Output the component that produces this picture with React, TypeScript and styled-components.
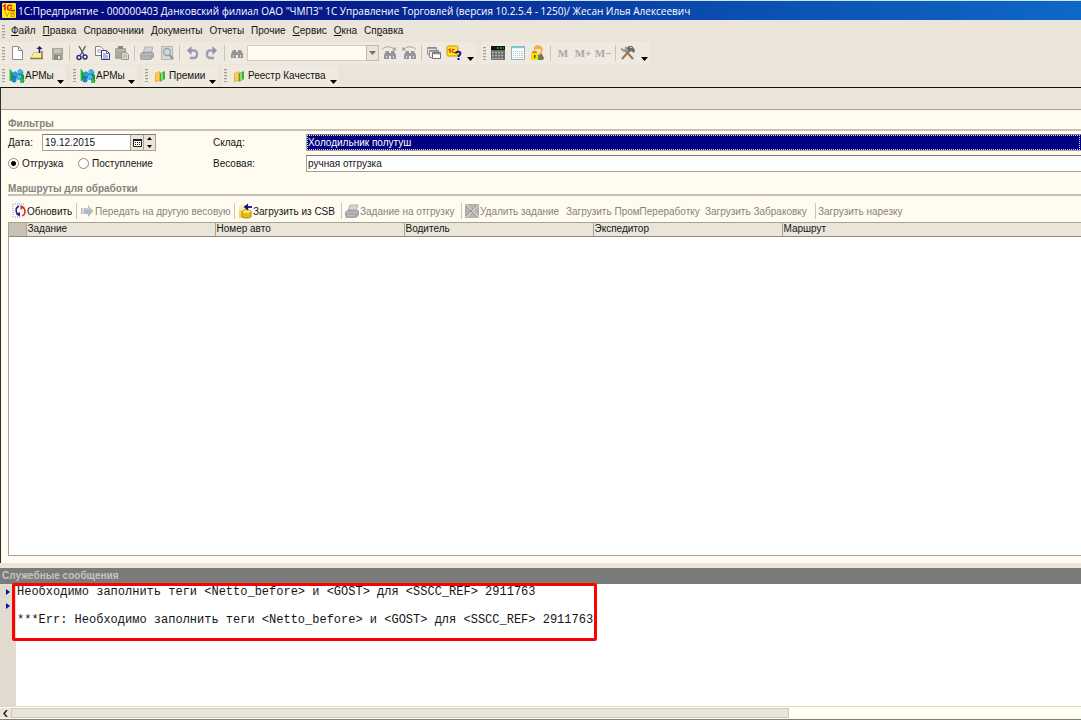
import React from "react";
import styled, { createGlobalStyle, css } from "styled-components";

const color = {
  face: "#ebe4d9",
  bar: "#efe9df",
  cream: "#fffbf0",
  line: "#a8a294",
  soft: "#c8c2b4",
  ink: "#141414",
  muted: "#86837c",
  navy: "#000080",
};

const GlobalStyle = createGlobalStyle`
  * { box-sizing: border-box; }
  html, body { margin: 0; }
  body, button, input, select, table {
    font-family: "Liberation Sans", Arial, sans-serif;
    font-size: 10px;
    color: ${color.ink};
  }
  button, input, select { margin: 0; padding: 0; border: 0; border-radius: 0; background: none; }
  svg { display: block; flex: none; }
`;

const Window = styled.div`
  display: flex;
  flex-direction: column;
  min-height: 100vh;
  overflow: hidden;
  background: ${color.face};
`;

const TitleBar = styled.header`
  display: flex;
  align-items: center;
  gap: 2px;
  height: 20px;
  padding-left: 2px;
  border-top: 1px solid #cfe4f4;
  background: linear-gradient(90deg, #04047c 0%, #061c8c 30%, #0a4cae 65%, #0e68c6 100%);
`;

const Title = styled.h1`
  margin: 0;
  font-family: "Open Sans", "Noto Sans", sans-serif;
  font-size: 10px;
  font-weight: 400;
  line-height: 18px;
  color: #fff;
  white-space: nowrap;
`;

const BarRow = styled.div<{ $height: number }>`
  display: flex;
  align-items: center;
  height: ${(p) => p.$height}px;
`;

const Bar = styled.div<{ $gap?: number }>`
  display: flex;
  align-items: center;
  height: 22px;
  margin-right: ${(p) => p.$gap ?? 0}px;
  padding-left: 2px;
  border-radius: 2px;
  background: ${color.bar};
`;

const Grip = styled.span`
  flex: none;
  width: 3px;
  height: 13px;
  margin-right: 2px;
  background: repeating-linear-gradient(#a39d92 0 1px, #d9d3c8 1px 2px, transparent 2px 3px);
`;

const MenuBar = styled.nav`
  display: flex;
  align-items: center;
  height: 22px;
  padding-left: 2px;
`;

const MenuItem = styled.button`
  padding: 0 3px;
  margin-left: 1px;
  line-height: 16px;
  white-space: nowrap;
  u { text-underline-offset: 1px; }
`;

const IconButton = styled.button<{ $width?: number }>`
  display: flex;
  flex: none;
  align-items: center;
  justify-content: center;
  width: ${(p) => p.$width ?? 20}px;
  height: 20px;
`;

const Separator = styled.span`
  flex: none;
  width: 1px;
  height: 16px;
  margin: 0 2px;
  background: #cbc5b9;
`;

const MoreButton = styled.button`
  flex: none;
  align-self: flex-end;
  display: flex;
  justify-content: center;
  align-items: flex-end;
  width: 12px;
  height: 12px;
  padding-bottom: 3px;
`;

const Memory = styled(IconButton)`
  font-family: "Liberation Serif", "Times New Roman", serif;
  font-size: 11px;
  font-weight: 700;
  color: #a7a5aa;
`;

const SearchBox = styled.div`
  position: relative;
  width: 132px;
  height: 16px;
`;

const SearchSelect = styled.select`
  display: block;
  width: 100%;
  height: 16px;
  appearance: none;
  border: 1px solid #d3cdc1;
  background: ${color.cream};
`;

const SearchArrow = styled.span`
  position: absolute;
  top: 0;
  right: 0;
  display: flex;
  align-items: center;
  justify-content: center;
  width: 13px;
  height: 16px;
  border: 1px solid #c2bcb0;
  background: ${color.face};
  pointer-events: none;
`;

const LabelButton = styled.button<{ $width: number; $spaced: boolean }>`
  display: flex;
  align-items: center;
  gap: ${(p) => (p.$spaced ? 3 : 0)}px;
  width: ${(p) => p.$width}px;
  height: 20px;
  padding-left: ${(p) => (p.$spaced ? 4 : 2)}px;
  white-space: nowrap;
`;

const Form = styled.main`
  display: flex;
  flex: 1 0 auto;
  flex-direction: column;
  border-top: 1px solid #101018;
  border-left: 1px solid #303030;
  background: ${color.cream};
`;

const TabStrip = styled.div`
  height: 22px;
  border-bottom: 1px solid ${color.line};
  background: ${color.face};
`;

const FormBody = styled.div`
  display: flex;
  flex: 1;
  flex-direction: column;
  padding: 8px 0 7px 7px;
`;

const GroupTitle = styled.h2`
  margin: 0;
  height: 13px;
  border-bottom: 2px solid ${color.soft};
  font-size: 10px;
  font-weight: 700;
  line-height: 11px;
  color: ${color.muted};
`;

const Filters = styled.div`
  display: grid;
  grid-template-columns: 205px 93px 1fr;
  row-gap: 4px;
  align-items: center;
  padding: 3px 0 11px;
`;

const Cell = styled.div`
  display: flex;
  align-items: center;
  height: 17px;
`;

const DateLabel = styled.label`
  width: 34px;
`;

const fieldBorder = css`
  border: 1px solid ${color.line};
  border-top-color: #7f7a70;
`;

const DateBox = styled.div`
  ${fieldBorder}
  display: flex;
  width: 114px;
  height: 17px;
  background: #fff;
`;

const DateInput = styled.input`
  flex: 1;
  min-width: 0;
  padding-left: 2px;
`;

const DateButton = styled.button`
  display: flex;
  align-items: center;
  justify-content: center;
  width: 13px;
  border-left: 1px solid ${color.line};
  background: ${color.face};
`;

const Spin = styled.div`
  display: flex;
  flex-direction: column;
  width: 12px;
  border-left: 1px solid ${color.line};
  background: ${color.face};
`;

const SpinButton = styled.button`
  display: flex;
  flex: 1;
  align-items: center;
  justify-content: center;
`;

const RadioLabel = styled.label`
  display: flex;
  align-items: center;
  gap: 3px;
  width: 70px;
`;

const Radio = styled.input`
  flex: none;
  appearance: none;
  width: 11px;
  height: 11px;
  margin: 0;
  border: 1px solid #8f8a80;
  border-radius: 50%;
  background: #fff;
  &:checked { background: radial-gradient(circle, #000 0 2px, #fff 3px); }
`;

const Field = styled.input<{ $active?: boolean }>`
  ${fieldBorder}
  width: 100%;
  height: 17px;
  padding-left: 1px;
  border-right: 0;
  background: #fff;
  ${(p) =>
    p.$active &&
    css`
      outline: 1px dotted #d8d8f0;
      outline-offset: -2px;
      background: ${color.navy};
      color: #fff;
    `}
`;

const CommandBar = styled.div`
  display: flex;
  align-items: center;
  height: 26px;
  padding: 4px 0 0 3px;
`;

const Command = styled.button<{ $width: number }>`
  display: flex;
  align-items: center;
  flex: none;
  width: ${(p) => p.$width}px;
  height: 20px;
  white-space: nowrap;
  &:disabled { color: ${color.muted}; }
`;

const Grid = styled.div`
  flex: 1;
  border: 1px solid ${color.line};
  border-right: 0;
  background: #fff;
`;

const Table = styled.table`
  width: 100%;
  table-layout: fixed;
  border-collapse: collapse;
`;

const Head = styled.th<{ $width?: number }>`
  width: ${(p) => (p.$width ? `${p.$width}px` : "auto")};
  height: 13px;
  padding: 0 1px;
  border-left: 1px solid ${color.line};
  border-bottom: 1px solid #8f897c;
  background: ${color.face};
  font-weight: 400;
  line-height: 12px;
  text-align: left;
  &:first-child { border-left: 0; background: #c8c1b6; }
`;

const Messages = styled.section`
  display: flex;
  flex-direction: column;
  height: 157px;
  padding-top: 5px;
  border-bottom: 1px solid #7f7f78;
`;

const MessagesTitle = styled.h2`
  margin: 0;
  height: 16px;
  padding-left: 2px;
  background: #7b7b7b;
  font-size: 10px;
  font-weight: 700;
  line-height: 16px;
  color: #c6c4c0;
`;

const MessagesBody = styled.div`
  display: flex;
  flex: 1;
  background: #fff;
`;

const Gutter = styled.div`
  display: flex;
  flex-direction: column;
  align-items: center;
  width: 16px;
  padding-top: 1px;
  background: #e2dbd0;
`;

const Marker = styled.span`
  display: flex;
  align-items: center;
  height: 14px;
`;

const Log = styled.div`
  position: relative;
  flex: 1;
  padding: 1px 0 0 1px;
  font-family: "Liberation Mono", "Courier New", monospace;
  font-size: 12px;
  line-height: 14px;
`;

const LogLine = styled.p`
  margin: 0;
  min-height: 14px;
  white-space: pre;
`;

const Highlight = styled.div`
  position: absolute;
  top: -1px;
  left: -4px;
  width: 585px;
  height: 58px;
  border: 3px solid #fd0000;
  border-radius: 2px;
  pointer-events: none;
`;

const ScrollBar = styled.div`
  display: flex;
  height: 13px;
  padding: 1px 0;
  border-top: 1px solid #dcd6ca;
  background: #fffff2;
`;

const ScrollButton = styled.button`
  display: flex;
  align-items: center;
  justify-content: center;
  width: 11px;
  background: ${color.face};
`;

const ScrollThumb = styled.div`
  width: 72%;
  border: 1px solid #cdc6ba;
  background: ${color.face};
`;

type IconProps = { children: React.ReactNode; w?: number; h?: number };

const Icon = ({ children, w = 16, h = 16 }: IconProps) => (
  <svg width={w} height={h} viewBox={`0 0 ${w} ${h}`} fill="none" aria-hidden="true">
    {children}
  </svg>
);

const LogoIcon = () => (
  <Icon w={14} h={15}>
    <rect width="14" height="15" rx="1" fill="#fde910" />
    <path d="M1 3.500 3 2v5.500M10 3.200C9 1.800 5.500 1.800 5.500 4.700S8 7.500 13 7.500M10 5.300H8" stroke="#e01818" strokeWidth="1.500" />
    <path d="m3 9 2 4.500L7 9M9 9h3v2H9zM9 11h3v2.500H9z" stroke="#c8a000" strokeWidth="1" />
  </Icon>
);

const NewIcon = () => (
  <Icon>
    <path d="M3.500 1.500h6l4 4v9h-10z" fill="#fff" stroke="#8a8a90" />
    <path d="M9.500 1.500v4h4" stroke="#8a8a90" />
  </Icon>
);

const OpenIcon = () => (
  <Icon>
    <path d="M1 13.500 4 7h8v7z" fill="#f4ecaa" />
    <path d="M12 13V6h2v7z" fill="#a8964c" />
    <path d="M1 13.500h13" stroke="#8e7a24" strokeWidth="1.500" />
    <path d="m2 13 2.500-5.500H12" stroke="#d8c878" />
    <path d="M10.500 8V3" stroke="#1a1a84" strokeWidth="1.600" />
    <path d="M7.500 4 10.500 1l3 3z" fill="#1a1a84" />
  </Icon>
);

const SaveIcon = () => (
  <Icon>
    <path d="M3 3h11v12H3z" fill="#a9aa96" />
    <path d="M5 4h7v4H5z" fill="#c4c5b4" />
    <path d="M5 10h7v5H5z" fill="#8b8c80" />
    <path d="M9 11h2v3H9z" fill="#deded4" />
  </Icon>
);

const CutIcon = () => (
  <Icon>
    <path d="m5 1 5 9M11.500 1 6.500 10" stroke="#55555c" strokeWidth="1.300" />
    <circle cx="5" cy="12.500" r="2" stroke="#26268e" strokeWidth="1.400" />
    <circle cx="11" cy="12" r="2" stroke="#26268e" strokeWidth="1.400" />
  </Icon>
);

const CopyIcon = () => (
  <Icon>
    <path d="M1.500 1.500h5l3 3v6h-8z" fill="#fff" stroke="#808088" />
    <path d="M3 5h4M3 7h4" stroke="#9a9aa4" />
    <path d="M7.500 5.500h5l3 3v6h-8z" fill="#fff" stroke="#33338f" />
    <path d="M12.500 5.500v3h3M9 9h3M9 11h5M9 13h5" stroke="#6d6dae" />
  </Icon>
);

const PasteIcon = () => (
  <Icon>
    <path d="M1 3h11v11H1z" fill="#aaa99a" />
    <path d="M4 1h5v4H4z" fill="#8b8b82" />
    <path d="M3 5h7" stroke="#d2d1c6" />
    <path d="M7.500 7.500h5l2 2v5h-7z" fill="#dcdbd4" stroke="#96968e" />
    <path d="M9 10h4M9 12h4" stroke="#a9a9a2" />
  </Icon>
);

const PrintIcon = () => (
  <Icon>
    <path d="M6 2h8l-2 6H4z" fill="#d3d3d4" stroke="#b4b4b6" />
    <path d="m1 9 3-2.500h9L15 8v4l-3 3H2l-1-2z" fill="#a6a6a9" />
    <path d="M2 9.500h10l2.500-2" stroke="#c0c0c2" />
    <path d="M3 12.500h8" stroke="#bcbcbe" strokeWidth="1.500" />
  </Icon>
);

const PreviewIcon = () => (
  <Icon>
    <path d="M2.500 1.500h11v13h-11z" fill="#d8dad8" stroke="#b4b6b5" />
    <circle cx="8" cy="7" r="3.500" fill="#c6d9dc" stroke="#9aa2a6" strokeWidth="1.300" />
    <path d="m10.500 10 3.500 4" stroke="#929296" strokeWidth="2" />
  </Icon>
);

const UndoIcon = ({ flip }: { flip?: boolean }) => (
  <Icon>
    <g transform={flip ? "matrix(-1 0 0 1 16 0)" : undefined}>
      <path d="M5 5.500h5a3 3 0 0 1 3 3v1.500a3 3 0 0 1-3 3H6" stroke="#9c9cb6" strokeWidth="2.400" />
      <path d="M7.500 1v9L3 5.500z" fill="#9191ae" />
    </g>
  </Icon>
);

const Binoculars = () => (
  <>
    <path d="M4 6h3v8H2v-4zM9 6h3l2 4v4H9zM7 8h2v3H7z" fill="#94949a" />
    <path d="M4 11h1v2H4zM11 11h1v2h-1z" fill="#dedee0" />
  </>
);

const FindIcon = () => <Icon><g transform="translate(0 -1)"><Binoculars /></g></Icon>;

const FindStepIcon = ({ flip }: { flip?: boolean }) => (
  <Icon>
    <g transform="translate(1 0)"><Binoculars /></g>
    <g transform={flip ? "matrix(-1 0 0 1 16 0)" : undefined}>
      <path d="M1 4.500C4 1 10 1 13 4" stroke="#a3a3a9" />
      <path d="m14.500 1.500.5 4h-4z" fill="#a3a3a9" />
    </g>
  </Icon>
);

const WindowsIcon = () => (
  <Icon>
    <path d="M1.500 2.500h9v7h-9z" fill="#e4e4e2" stroke="#9a9a9e" />
    <path d="M3.500 5.500h9v7h-9z" fill="#eeeeec" stroke="#8c8c90" />
    <path d="M6.500 7.500h8v6h-8z" fill="#fff" stroke="#707076" />
    <path d="M2 3h8M4 6h8M7 8.500h7" stroke="#8a8a90" strokeWidth="1.500" />
  </Icon>
);

const HelpIcon = () => (
  <Icon>
    <rect x="1" y="1" width="11" height="10" rx="1.500" fill="#ffe51a" stroke="#c09a10" />
    <path d="m2.500 5 1.500-1v4M8.500 4.500C6 3.500 5 7.500 8 7.500h3" stroke="#d82c10" strokeWidth="1.200" />
    <path d="M10 8.500c0-2.500 4.500-2.500 4.500 0 0 1.500-2 1.500-2 3.500" stroke="#10108c" strokeWidth="1.800" />
    <path d="M11.500 13h2v2h-2z" fill="#10108c" />
  </Icon>
);

const CalcIcon = () => (
  <Icon>
    <path d="M1 1h14v14H1z" fill="#6c6c6c" />
    <path d="M1 1h14v4H1z" fill="#0a1a0c" />
    <path d="M7 3h7" stroke="#2fa84c" strokeWidth="1.500" strokeDasharray="2 1" />
    <path d="M2 7.500h12M2 10.500h12M2 13.500h12" stroke="#b4b4b4" strokeWidth="1.500" strokeDasharray="2 1" />
  </Icon>
);

const CalendarIcon = () => (
  <Icon>
    <path d="M1.500 1.500h13v13h-13z" fill="#fff" stroke="#8fb4be" />
    <path d="M2 2.500h12" stroke="#74ccd8" strokeWidth="1.500" />
    <path d="M3 6.500h10M3 8.500h10M3 10.500h10M3 12.500h10" stroke="#a9c6cc" strokeDasharray="1 1" />
    <path d="M12 6v7" stroke="#e88c7c" strokeDasharray="1 1" />
  </Icon>
);

const UserIcon = () => (
  <Icon>
    <path d="M8 9h3l2 6H8z" fill="#3c9468" />
    <path d="M4 2 7 0l4 1 2 3-2 6H7L4 6z" fill="#eeb04c" />
    <path d="M5 4h5l1 2-2 3H6z" fill="#fbe1b4" />
    <path d="m11 9 2.500 5" stroke="#c03c2c" strokeWidth="1.500" />
    <path d="M3 9V7h3v2" stroke="#a48a10" strokeWidth="1.500" />
    <path d="M1 8h7v7H1z" fill="#f4de0c" />
    <path d="M4 10h1.500v3H4z" fill="#a02818" />
  </Icon>
);

const ToolsIcon = () => (
  <Icon>
    <path d="m2 14 8-9" stroke="#a87848" strokeWidth="2.200" />
    <path d="m6 3 3-2h3l3 4-1 3-3-2-2 1z" fill="#6b6b6e" />
    <path d="M10 2.500h2" stroke="#d0d0d2" />
    <path d="m5 5 8 9" stroke="#8a7a6a" strokeWidth="2.200" />
    <path d="M1 2v3l3 2 2-1 1-3-2-2v3H3z" fill="#9c9c9f" />
  </Icon>
);

const WorkplaceIcon = () => (
  <Icon>
    <path d="M1 1v12l4-2-1-6zM12 5l3 2v8l-3-1z" fill="#10a02c" />
    <path d="M1 1v12M12 10v5" stroke="#3ccc4c" />
    <path d="m5 5 4 3M8 11l5-8M6 8l-2 5M9 7l4 5" stroke="#186cae" strokeWidth="3.500" />
    <circle cx="11" cy="3.500" r="2.500" fill="#3db2e4" />
    <circle cx="6" cy="6" r="2.500" fill="#2a9cd8" />
    <circle cx="10" cy="9" r="2.500" fill="#46bce8" />
    <circle cx="5" cy="12" r="2.500" fill="#1f84c8" />
    <path d="M11.500 9.500v6l4.500-3z" fill="#22c03c" />
  </Icon>
);

const BookIcon = () => (
  <Icon w={12}>
    <path d="m1 5 5-2v10l-5 1z" fill="#f0a82c" />
    <path d="m2 5 3-1v8l-3 1z" fill="#fbcf54" />
    <path d="m6 5 5-2v8l-5 3z" fill="#3cae44" />
    <path d="m7 5 2-1v8l-2 1z" fill="#8fdb6a" />
  </Icon>
);

const RefreshIcon = () => (
  <Icon>
    <path d="M2 1v14M4 1h9M4 14h5" stroke="#57a0d0" strokeDasharray="1 1" />
    <path d="M8 3C4 5 4.500 9 7 11.500" stroke="#20208c" strokeWidth="1.500" />
    <path d="m5 11.500 4 2V9z" fill="#20208c" />
    <path d="M11 13c3.500-1 4-5 1.500-8.500" stroke="#d22434" strokeWidth="1.500" />
    <path d="m13.500 4-4-2v5z" fill="#d22434" />
  </Icon>
);

const ForwardIcon = () => (
  <Icon>
    <path d="M2 5h1.500v6H2zM4.500 5H9V2l5.500 6L9 14v-3H4.500z" fill="#b0b9bc" />
    <path d="M5 6h5V4l3.500 4" stroke="#d0d6d8" />
  </Icon>
);

const LoadIcon = () => (
  <Icon>
    <path d="M2 2h8l2 3v10H2z" fill="#f3d760" />
    <path d="M2 2h6v5H2z" fill="#f9efb0" />
    <path d="M5 8.500c0-2 9-2 9 0v5c0 2-9 2-9 0z" fill="#e3bd10" stroke="#a78a18" />
    <ellipse cx="9.500" cy="8.500" rx="4" ry="1.300" fill="#fff07c" />
    <path d="M15 4h-5" stroke="#15158a" strokeWidth="1.800" />
    <path d="M11 .5v7L6.500 4z" fill="#15158a" />
  </Icon>
);

const DeleteIcon = () => (
  <Icon>
    <path d="M1 1h14v14H1z" fill="#b0afaa" />
    <path d="M3 4h10M3 7h10M3 10h10M3 13h10" stroke="#c4c3be" />
    <path d="m2 2 12 12M14 2 2 14" stroke="#dcd0ca" strokeWidth="2" />
    <path d="m2 3 11 11M13 2 2 13" stroke="#958f8b" />
  </Icon>
);

const Triangle = ({ fill = "#000" }: { fill?: string }) => (
  <Icon w={7} h={4}>
    <path d="M0 0h7L3.500 4z" fill={fill} />
  </Icon>
);

const SmallTriangle = ({ up }: { up?: boolean }) => (
  <Icon w={5} h={3}>
    <path d={up ? "M0 3h5L2.500 0z" : "M0 0h5L2.500 3z"} fill="#000" />
  </Icon>
);

const PickIcon = () => (
  <Icon w={9} h={9}>
    <path d="M.5 1.500h8v7h-8z" fill="#fff" stroke="#222" />
    <path d="M0 2h9" stroke="#222" strokeWidth="2" />
    <path d="M2 4.500h5M2 6.500h5" stroke="#222" strokeDasharray="1 1" />
  </Icon>
);

const MarkerIcon = () => (
  <Icon w={4} h={6}>
    <path d="M0 0v6l4-3z" fill="#1010a0" />
  </Icon>
);

const menu: [string, string, string][] = [
  ["", "Ф", "айл"],
  ["", "П", "равка"],
  ["Справочники", "", ""],
  ["Документы", "", ""],
  ["Отчеты", "", ""],
  ["Прочие", "", ""],
  ["", "С", "ервис"],
  ["", "О", "кна"],
  ["Сп", "р", "авка"],
];

const shortcuts = [
  { label: "АРМы", icon: <WorkplaceIcon />, spaced: false, width: 47, gap: 5 },
  { label: "АРМы", icon: <WorkplaceIcon />, spaced: false, width: 47, gap: 6 },
  { label: "Премии", icon: <BookIcon />, spaced: true, width: 56, gap: 4 },
  { label: "Реестр Качества", icon: <BookIcon />, spaced: true, width: 98, gap: 0 },
];

const columns = [
  { title: "", width: 17 },
  { title: "Задание", width: 189 },
  { title: "Номер авто", width: 189 },
  { title: "Водитель", width: 189 },
  { title: "Экспедитор", width: 189 },
  { title: "Маршрут" },
];

const warning = "Необходимо заполнить теги <Netto_before> и <GOST> для <SSCC_REF> 2911763";

export default function App() {
  return (
    <Window>
      <GlobalStyle />
      <TitleBar>
        <LogoIcon />
        <Title>
          1С:Предприятие - 000000403 Данковский филиал ОАО "ЧМПЗ" 1С Управление Торговлей (версия 10.2.5.4 - 1250)/
          Жесан Илья Алексеевич
        </Title>
      </TitleBar>

      <MenuBar aria-label="Главное меню">
        <Grip />
        {menu.map(([before, key, after]) => (
          <MenuItem key={before + key + after}>
            {before}
            {key && <u>{key}</u>}
            {after}
          </MenuItem>
        ))}
      </MenuBar>

      <BarRow $height={22}>
        <Bar $gap={5}>
          <Grip />
          <IconButton aria-label="Новый"><NewIcon /></IconButton>
          <IconButton aria-label="Открыть"><OpenIcon /></IconButton>
          <IconButton aria-label="Сохранить"><SaveIcon /></IconButton>
          <Separator />
          <IconButton aria-label="Вырезать"><CutIcon /></IconButton>
          <IconButton aria-label="Копировать"><CopyIcon /></IconButton>
          <IconButton aria-label="Вставить"><PasteIcon /></IconButton>
          <Separator />
          <IconButton aria-label="Печать"><PrintIcon /></IconButton>
          <IconButton aria-label="Просмотр"><PreviewIcon /></IconButton>
          <Separator />
          <IconButton aria-label="Отменить"><UndoIcon /></IconButton>
          <IconButton aria-label="Вернуть"><UndoIcon flip /></IconButton>
          <Separator />
          <IconButton aria-label="Найти"><FindIcon /></IconButton>
          <SearchBox>
            <SearchSelect aria-label="Строка поиска" />
            <SearchArrow><Triangle fill="#77736b" /></SearchArrow>
          </SearchBox>
          <IconButton aria-label="Найти далее"><FindStepIcon /></IconButton>
          <IconButton aria-label="Найти ранее"><FindStepIcon flip /></IconButton>
          <Separator />
          <IconButton aria-label="Окна"><WindowsIcon /></IconButton>
          <IconButton aria-label="Помощь"><HelpIcon /></IconButton>
          <MoreButton aria-label="Ещё"><Triangle /></MoreButton>
        </Bar>
        <Bar>
          <Grip />
          <IconButton aria-label="Калькулятор"><CalcIcon /></IconButton>
          <IconButton aria-label="Календарь"><CalendarIcon /></IconButton>
          <IconButton aria-label="Пользователь"><UserIcon /></IconButton>
          <Separator />
          <Memory>M</Memory>
          <Memory>M+</Memory>
          <Memory>M−</Memory>
          <Separator />
          <IconButton aria-label="Настройка"><ToolsIcon /></IconButton>
          <MoreButton aria-label="Ещё"><Triangle /></MoreButton>
        </Bar>
      </BarRow>

      <BarRow $height={23}>
        {shortcuts.map((s, i) => (
          <Bar key={i} $gap={s.gap}>
            <Grip />
            <LabelButton $width={s.width} $spaced={s.spaced}>
              {s.icon}
              {s.label}
            </LabelButton>
            <MoreButton aria-label="Ещё"><Triangle /></MoreButton>
          </Bar>
        ))}
      </BarRow>

      <Form>
        <TabStrip />
        <FormBody>
          <GroupTitle>Фильтры</GroupTitle>
          <Filters>
            <Cell>
              <DateLabel htmlFor="date">Дата:</DateLabel>
              <DateBox>
                <DateInput id="date" defaultValue="19.12.2015" />
                <DateButton aria-label="Выбрать дату"><PickIcon /></DateButton>
                <Spin>
                  <SpinButton aria-label="Следующий день"><SmallTriangle up /></SpinButton>
                  <SpinButton aria-label="Предыдущий день"><SmallTriangle /></SpinButton>
                </Spin>
              </DateBox>
            </Cell>
            <label htmlFor="store">Склад:</label>
            <Field id="store" defaultValue="Холодильник полутуш" $active />
            <Cell>
              <RadioLabel>
                <Radio type="radio" name="direction" defaultChecked />
                Отгрузка
              </RadioLabel>
              <RadioLabel>
                <Radio type="radio" name="direction" />
                Поступление
              </RadioLabel>
            </Cell>
            <label htmlFor="scale">Весовая:</label>
            <Field id="scale" defaultValue="ручная отгрузка" />
          </Filters>

          <GroupTitle>Маршруты для обработки</GroupTitle>
          <CommandBar>
            <Command $width={63}><RefreshIcon />Обновить</Command>
            <Separator />
            <Command $width={153} disabled><ForwardIcon />Передать на другую весовую</Command>
            <Separator />
            <Command $width={102}><LoadIcon />Загрузить из CSB</Command>
            <Separator />
            <Command $width={115} disabled><PrintIcon />Задание на отгрузку</Command>
            <Separator />
            <Command $width={102} disabled><DeleteIcon />Удалить задание</Command>
            <Command $width={139} disabled>Загрузить ПромПереработку</Command>
            <Command $width={108} disabled>Загрузить Забраковку</Command>
            <Separator />
            <Command $width={90} disabled>Загрузить нарезку</Command>
          </CommandBar>
          <Grid>
            <Table>
              <thead>
                <tr>
                  {columns.map((c) => (
                    <Head key={c.title} $width={c.width} scope="col">{c.title}</Head>
                  ))}
                </tr>
              </thead>
            </Table>
          </Grid>
        </FormBody>
      </Form>

      <Messages>
        <MessagesTitle>Служебные сообщения</MessagesTitle>
        <MessagesBody>
          <Gutter>
            <Marker><MarkerIcon /></Marker>
            <Marker><MarkerIcon /></Marker>
          </Gutter>
          <Log>
            <LogLine>{warning}</LogLine>
            <LogLine />
            <LogLine>***Err: {warning}</LogLine>
            <Highlight />
          </Log>
        </MessagesBody>
        <ScrollBar>
          <ScrollButton aria-label="Прокрутить влево">
            <Icon w={5} h={7}><path d="M4 0 1 3.500 4 7" stroke="#222" strokeWidth="1.500" /></Icon>
          </ScrollButton>
          <ScrollThumb />
        </ScrollBar>
      </Messages>
    </Window>
  );
}
